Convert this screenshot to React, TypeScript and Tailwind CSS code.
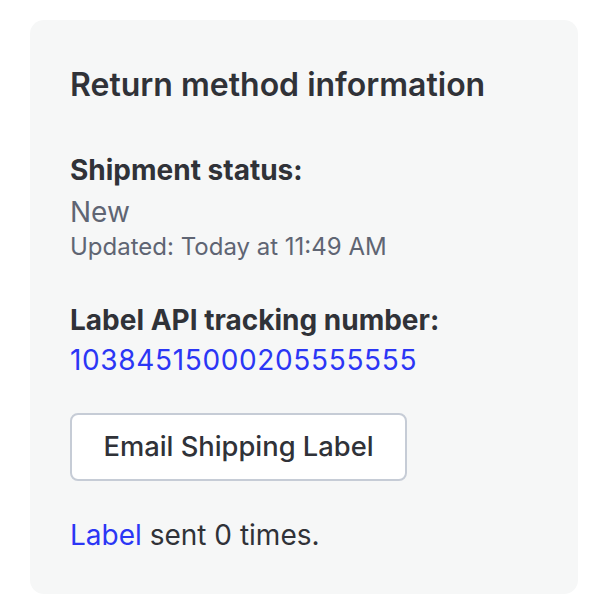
export default function App() {
  return (
    <div className="min-h-screen bg-white p-[20px_24px_20px_30px] font-['Inter',sans-serif]">
      <div className="w-[548px] h-[574px] rounded-[14px] bg-[#f6f7f7] px-10 pt-[45px]">
        <h2 className="text-[32px] leading-[40px] font-semibold text-[#303238]">
          Return method information
        </h2>

        <div className="mt-[45px]">
          <p className="text-[28px] leading-[40px] font-bold text-[#303238]">Shipment status:</p>
          <p className="text-[28px] leading-[40px] text-[#5f6573] mt-[2px]">New</p>
          <p className="text-[24px] leading-[30px] text-[#5f6573]">Updated: Today at 11:49 AM</p>
        </div>

        <div className="mt-[38px]">
          <p className="text-[28px] leading-[40px] font-bold text-[#303238]">Label API tracking number:</p>
          <a href="#" className="block text-[28px] leading-[40px] tracking-[0.65px] text-[#2b36f5]">
            10384515000205555555
          </a>
        </div>

        <button
          type="button"
          className="mt-[33px] flex h-[68px] w-[337px] items-center justify-center rounded-[8px] border-2 border-[#c6ccd6] bg-white text-[27.3px] font-medium text-[#303238]"
        >
          Email Shipping Label
        </button>

        <p className="mt-[34px] text-[28px] leading-[40px] text-[#303238]">
          <a href="#" className="text-[#2b36f5]">Label</a> sent 0 times.
        </p>
      </div>
    </div>
  );
}
